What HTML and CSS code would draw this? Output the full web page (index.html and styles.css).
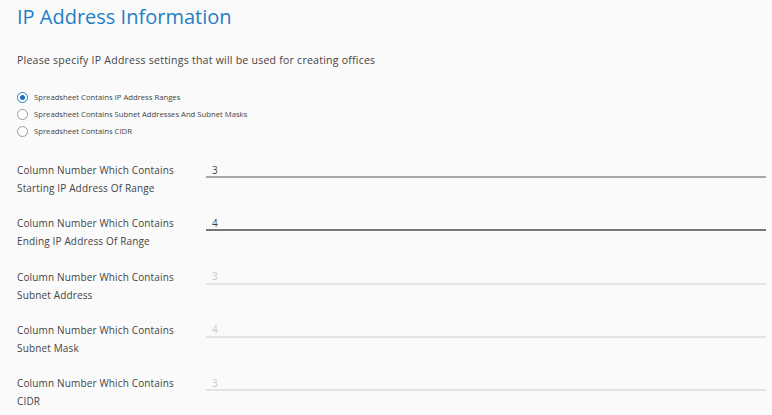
FILE: index.html
```html
<!DOCTYPE html>
<html>
<head>
<meta charset="utf-8">
<link rel="stylesheet" href="styles.css">
</head>
<body>
<div class="page">
  <h1 class="title">IP Address Information</h1>
  <p class="intro">Please specify IP Address settings that will be used for creating offices</p>
  <div class="radios">
    <label class="radio"><span class="dot checked"></span>Spreadsheet Contains IP Address Ranges</label>
    <label class="radio"><span class="dot"></span>Spreadsheet Contains Subnet Addresses And Subnet Masks</label>
    <label class="radio"><span class="dot"></span>Spreadsheet Contains CIDR</label>
  </div>
  <div class="fields">
    <div class="field">
      <div class="label">Column Number Which Contains<br>Starting IP Address Of Range</div>
      <div class="input hover">3</div>
    </div>
    <div class="field">
      <div class="label">Column Number Which Contains<br>Ending IP Address Of Range</div>
      <div class="input focus">4</div>
    </div>
    <div class="field">
      <div class="label">Column Number Which Contains<br>Subnet Address</div>
      <div class="input disabled">3</div>
    </div>
    <div class="field">
      <div class="label">Column Number Which Contains<br>Subnet Mask</div>
      <div class="input disabled">4</div>
    </div>
    <div class="field">
      <div class="label">Column Number Which Contains<br>CIDR</div>
      <div class="input disabled">3</div>
    </div>
  </div>
</div>
</body>
</html>
```
FILE: styles.css
```css
html, body {
  margin: 0;
  background: #fafafa;
}
body {
  font-family: "Open Sans", "Liberation Sans", sans-serif;
  color: #444;
}
.page {
  padding: 4px 6px 0 17px;
}
.title {
  margin: 0;
  font-size: 20px;
  font-weight: 400;
  line-height: 26px;
  color: #1f7fc4;
}
.intro {
  margin: 23px 0 0;
  font-size: 10.5px;
  letter-spacing: 0.25px;
  line-height: 14px;
  color: #444;
}
.radios {
  margin-top: 24px;
  display: flex;
  flex-direction: column;
  gap: 5px;
}
.radio {
  display: flex;
  align-items: center;
  gap: 6px;
  font-size: 7.7px;
  line-height: 12px;
  color: #444;
}
.dot {
  box-sizing: border-box;
  width: 11px;
  height: 11px;
  border-radius: 50%;
  border: 1px solid #999;
  background: #fff;
  position: relative;
}
.dot.checked {
  border-color: #1f7fc4;
}
.dot.checked::after {
  content: "";
  position: absolute;
  left: 2px;
  top: 2px;
  width: 5px;
  height: 5px;
  border-radius: 50%;
  background: #1f6fb8;
}
.fields {
  margin-top: 24px;
  display: flex;
  flex-direction: column;
  gap: 17.25px;
}
.field {
  display: flex;
  align-items: flex-start;
}
.label {
  width: 189px;
  flex: none;
  font-size: 10px;
  letter-spacing: 0.15px;
  line-height: 18px;
  color: #444;
}
.input {
  flex: 1;
  box-sizing: border-box;
  height: 17px;
  padding: 2.5px 0 0 6px;
  font-size: 10px;
  line-height: 13px;
  color: #444;
  border-bottom: 2px solid #d8d8d8;
}
.input.hover {
  border-bottom-color: #a8a8a8;
}
.input.focus {
  border-bottom-color: #777;
}
.input.disabled {
  color: #c8c8c8;
  border-bottom-color: #e4e4e4;
}
```
